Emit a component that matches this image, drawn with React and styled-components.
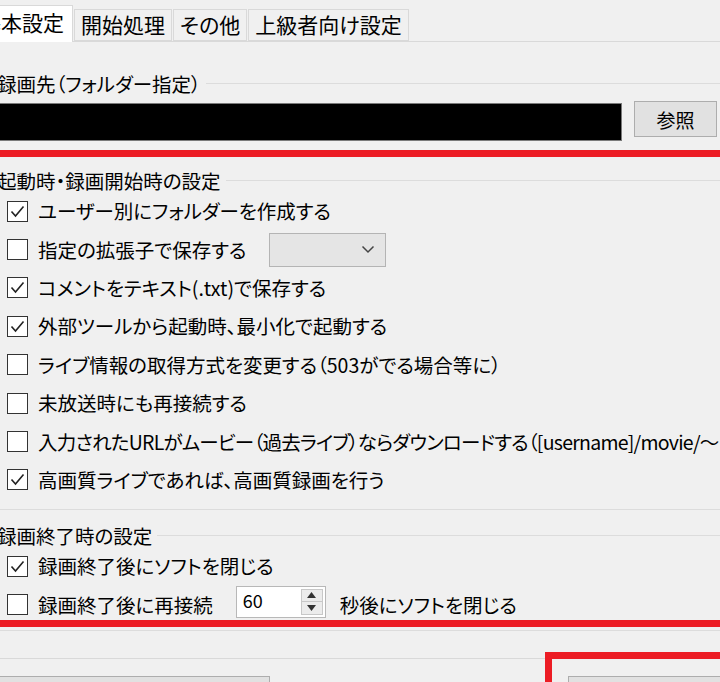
import React from "react";
import styled, { createGlobalStyle } from "styled-components";

const GlobalStyle = createGlobalStyle`
	html, body {
		margin: 0;
		padding: 0;
		background: #f0f0f0;
	}
	body {
		font-family: "Noto Sans CJK JP", "Noto Sans", sans-serif;
	}
`;

const startRows = [
	{ label: "ユーザー別にフォルダーを作成する", checked: true },
	{ label: "指定の拡張子で保存する", checked: false, combo: true },
	{ label: "コメントをテキスト(.txt)で保存する", checked: true },
	{ label: "外部ツールから起動時、最小化で起動する", checked: true },
	{ label: "ライブ情報の取得方式を変更する（503がでる場合等に）", checked: false },
	{ label: "未放送時にも再接続する", checked: false },
	{
		label: "入力されたURLがムービー（過去ライブ）ならダウンロードする（[username]/movie/～",
		checked: false,
		tight: true
	},
	{ label: "高画質ライブであれば、高画質録画を行う", checked: true }
];

const tabs = ["基本設定", "開始処理", "その他", "上級者向け設定"];

const CheckBox = ({ checked }) => (
	<Box>
		{checked && (
			<svg width="15" height="15" viewBox="0 0 15 15">
				<polyline
					points="1.5,7.5 5.5,12 13.5,2.5"
					fill="none"
					stroke="#222"
					strokeWidth="1.6"
				/>
			</svg>
		)}
	</Box>
);

const Check = ({ checked, label, tight, children }) => (
	<Row>
		<CheckBox checked={checked} />
		<Label $tight={tight}>{label}</Label>
		{children}
	</Row>
);

const App = () => {
	return (
		<Window>
			<GlobalStyle />
			<TabStrip>
				{tabs.map((t, i) => (
					<Tab key={t} $active={i === 0}>
						{t}
					</Tab>
				))}
			</TabStrip>

			<Panel>
				<Group $pb={11}>
					<GroupHeader>録画先（フォルダー指定）</GroupHeader>
					<PathRow>
						<PathInput />
						<Button>参照</Button>
					</PathRow>
				</Group>

				<Group $mt={15} $pb={10}>
					<GroupHeader>起動時・録画開始時の設定</GroupHeader>
					{startRows.map((r) => (
						<Check
							key={r.label}
							checked={r.checked}
							label={r.label}
							tight={r.tight}
						>
							{r.combo && (
								<Combo>
									<svg width="14" height="9" viewBox="0 0 14 9">
										<polyline
											points="1.5,1.5 7,7 12.5,1.5"
											fill="none"
											stroke="#444"
											strokeWidth="1.5"
										/>
									</svg>
								</Combo>
							)}
						</Check>
					))}
				</Group>

				<Group $mt={13} $pb={6}>
					<GroupHeader>録画終了時の設定</GroupHeader>
					<Check checked label="録画終了後にソフトを閉じる" />
					<Check checked={false} label="録画終了後に再接続">
						<Spinner>
							<SpinValue>60</SpinValue>
							<SpinButtons>
								<SpinHalf>
									<svg width="9" height="6" viewBox="0 0 9 6">
										<polygon points="4.5,0 9,6 0,6" fill="#333" />
									</svg>
								</SpinHalf>
								<SpinHalf>
									<svg width="9" height="6" viewBox="0 0 9 6">
										<polygon points="0,0 9,0 4.5,6" fill="#333" />
									</svg>
								</SpinHalf>
							</SpinButtons>
						</Spinner>
						<After>秒後にソフトを閉じる</After>
					</Check>
				</Group>
			</Panel>

			<BottomBar>
				<WideButton $w={280} $ml={-10} />
				<WideButton $w={180} $ml={0} />
			</BottomBar>

			{/* red annotation frames drawn over the screenshot */}
			<Highlight $top={150} $left={-20} $w={760} $h={477} />
			<Highlight $top={652} $left={545} $w={220} $h={100} />
		</Window>
	);
};

export default App;

const Window = styled.div`
	position: relative;
	width: 720px;
	height: 682px;
	overflow: hidden;
	background: #f0f0f0;
	color: #000;
	font-size: 19.5px;
	font-feature-settings: "palt";
`;

const TabStrip = styled.div`
	display: flex;
	align-items: flex-end;
	gap: 1px;
	height: 41px;
	margin-left: -29px;
	border-bottom: 1px solid #d9d9d9;
	position: relative;
	z-index: 1;
`;

const Tab = styled.div`
	box-sizing: border-box;
	display: flex;
	align-items: center;
	height: ${(p) => (p.$active ? "37px" : "32px")};
	margin-bottom: ${(p) => (p.$active ? "-1px" : "0")};
	padding: ${(p) => (p.$active ? "0 8px 4px 8px" : "0 6px 2px")};
	background: ${(p) => (p.$active ? "#ffffff" : "#f0f0f0")};
	border: 1px solid #d9d9d9;
	border-bottom: ${(p) => (p.$active ? "none" : "1px solid #d9d9d9")};
	font-size: 21px;
	white-space: nowrap;
`;

const Panel = styled.div`
	box-sizing: border-box;
	height: 617px;
	margin: 0 -30px 0 -12px;
	padding-top: 29px;
	border-bottom: 1px solid #d9d9d9;
`;

const Group = styled.section`
	margin-top: ${(p) => p.$mt || 0}px;
	padding-bottom: ${(p) => p.$pb}px;
	border-bottom: 1px solid #dcdcdc;
`;

const GroupHeader = styled.div`
	display: flex;
	align-items: center;
	height: 24px;
	padding-left: 9px;
	white-space: nowrap;

	&::after {
		content: "";
		flex: 1;
		height: 1px;
		margin-left: 5px;
		background: #dcdcdc;
	}
`;

const PathRow = styled.div`
	display: flex;
	align-items: flex-start;
	margin-top: 6px;
	padding-left: 7px;
`;

const PathInput = styled.div`
	box-sizing: border-box;
	width: 627px;
	height: 38px;
	margin-top: 2px;
	background: #000;
	border: 1px solid #7a7a7a;
`;

const Button = styled.div`
	box-sizing: border-box;
	display: flex;
	align-items: center;
	justify-content: center;
	width: 83px;
	height: 36px;
	margin-left: 12px;
	background: #e1e1e1;
	border: 1px solid #adadad;
	font-size: 19px;
`;

const Row = styled.div`
	display: flex;
	align-items: center;
	height: 38.4px;
	padding-left: 19px;
	white-space: nowrap;
`;

const Box = styled.span`
	box-sizing: border-box;
	display: flex;
	align-items: center;
	justify-content: center;
	flex: none;
	width: 21px;
	height: 21px;
	margin-right: 10px;
	background: #fff;
	border: 1px solid #333;
`;

const Label = styled.span`
	line-height: 24px;
	letter-spacing: ${(p) => (p.$tight ? "-0.75px" : "0")};
`;

const Combo = styled.span`
	box-sizing: border-box;
	display: flex;
	align-items: center;
	justify-content: flex-end;
	width: 117px;
	height: 34px;
	margin-left: 23px;
	padding-right: 10px;
	background: #e5e5e5;
	border: 1px solid #b4b4b4;
`;

const Spinner = styled.span`
	box-sizing: border-box;
	display: flex;
	align-items: stretch;
	width: 90px;
	height: 32px;
	margin: -6px 0 0 23px;
	background: #fff;
	border: 1px solid #b8b8b8;
`;

const SpinValue = styled.span`
	flex: 1;
	padding-left: 6px;
	font-size: 18px;
	line-height: 26px;
`;

const SpinButtons = styled.span`
	display: flex;
	flex-direction: column;
	width: 20px;
	margin: 2px 2px 2px 0;
	border: 1px solid #c8c8c8;
`;

const SpinHalf = styled.span`
	flex: 1;
	display: flex;
	align-items: center;
	justify-content: center;
	background: #ececec;

	& + & {
		border-top: 1px solid #c8c8c8;
	}
`;

const After = styled.span`
	margin-left: 14px;
`;

const BottomBar = styled.div`
	display: flex;
	justify-content: space-between;
	padding-top: 17px;
`;

const WideButton = styled.div`
	box-sizing: border-box;
	width: ${(p) => p.$w}px;
	height: 40px;
	margin-left: ${(p) => p.$ml}px;
	margin-right: ${(p) => (p.$ml === 0 ? -28 : 0)}px;
	background: #e1e1e1;
	border: 1px solid #adadad;
`;

const Highlight = styled.div`
	position: absolute;
	box-sizing: border-box;
	top: ${(p) => p.$top}px;
	left: ${(p) => p.$left}px;
	width: ${(p) => p.$w}px;
	height: ${(p) => p.$h}px;
	border: 7px solid #ec1c24;
	pointer-events: none;
`;
